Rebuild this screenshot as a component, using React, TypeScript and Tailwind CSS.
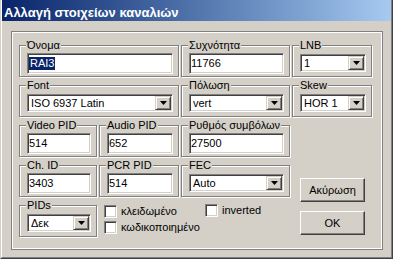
import type { ReactNode } from 'react'

const sunken =
  'border border-t-[#808080] border-l-[#808080] border-r-white border-b-white shadow-[inset_1px_1px_0_#404040,inset_-1px_-1px_0_#d4d0c8] bg-white'

const raised =
  'border border-t-[#d4d0c8] border-l-[#d4d0c8] border-r-[#404040] border-b-[#404040] shadow-[inset_1px_1px_0_#fff,inset_-1px_-1px_0_#808080] bg-[#d4d0c8]'

interface GroupProps {
  label: string
  className?: string
  children: ReactNode
}

function Group({ label, className = '', children }: GroupProps) {
  return (
    <fieldset
      className={`h-[38px] shrink-0 border border-[#808080] shadow-[inset_1px_1px_0_#fff,1px_1px_0_#fff] pl-[7px] pr-[5px] ${className}`}
    >
      <legend className="-ml-[1px] px-[1px] bg-[#d4d0c8] leading-[13px]">{label}</legend>
      {children}
    </fieldset>
  )
}

function Field({ value, selected = false }: { value: string; selected?: boolean }) {
  return (
    <div className={`mt-[1px] h-[21px] pl-[1px] flex items-center ${sunken}`}>
      {selected ? (
        <span className="inline-block bg-[#0a246a] text-white leading-[13px] pl-[1px] pr-[1px]">{value}</span>
      ) : (
        <span className="leading-[13px]">{value}</span>
      )}
    </div>
  )
}

function Combo({ value }: { value: string }) {
  return (
    <div className={`mt-[2px] h-[18px] p-[1px] flex ${sunken}`}>
      <span className="flex-1 pl-[2px] leading-[14px] truncate">{value}</span>
      <span className={`w-[16px] h-[14px] flex items-center justify-center ${raised}`}>
        <svg width="7" height="4" viewBox="0 0 7 4">
          <polygon points="0,0 7,0 3.5,4" fill="#000" />
        </svg>
      </span>
    </div>
  )
}

function Check({ label }: { label: string }) {
  return (
    <div className="flex items-center gap-[4px] h-[13px]">
      <span className={`w-[13px] h-[13px] shrink-0 ${sunken}`} />
      <span className="leading-[13px] whitespace-nowrap">{label}</span>
    </div>
  )
}

function Button({ label }: { label: string }) {
  return (
    <div
      className={`w-[65px] h-[24px] flex items-center justify-center border border-t-white border-l-white border-r-[#404040] border-b-[#404040] shadow-[inset_-1px_-1px_0_#808080] bg-[#d4d0c8]`}
    >
      {label}
    </div>
  )
}

export default function App() {
  return (
    <div className="w-[393px] h-[259px] bg-[#d4d0c8] text-[11px] text-black font-['Liberation_Sans',Arial,sans-serif] overflow-hidden">
      <div className="h-full border-l border-l-[#d4d0c8] border-r border-r-[#404040] border-b border-b-[#404040]">
        <div className="h-full flex flex-col border-l border-l-white border-r border-r-[#808080] border-b border-b-[#808080]">
          <div className="h-[21px] shrink-0 pl-[2px] pt-[5px] bg-gradient-to-r from-[#0a246a] to-[#a6caf0] text-white font-bold text-[13px] leading-[15px] whitespace-nowrap">
            Αλλαγή στοιχείων καναλιών
          </div>

          <div className="ml-[9px] mt-[10px] w-[372px] h-[219px] border border-[#808080] shadow-[inset_0_0_0_1px_#fff] pl-[7px] pt-[7px] flex flex-col gap-[2px]">
            <div className="flex gap-[2px]">
              <Group label="Όνομα" className="w-[160px]">
                <Field value="RAI3" selected />
              </Group>
              <Group label="Συχνότητα" className="w-[109px]">
                <Field value="11766" />
              </Group>
              <Group label="LNB" className="w-[80px]">
                <Combo value="1" />
              </Group>
            </div>

            <div className="flex gap-[2px]">
              <Group label="Font" className="w-[160px]">
                <Combo value="ISO 6937 Latin" />
              </Group>
              <Group label="Πόλωση" className="w-[109px]">
                <Combo value="vert" />
              </Group>
              <Group label="Skew" className="w-[80px]">
                <Combo value="HOR 1" />
              </Group>
            </div>

            <div className="flex gap-[2px]">
              <Group label="Video PID" className="w-[78px]">
                <Field value="514" />
              </Group>
              <Group label="Audio PID" className="w-[80px]">
                <Field value="652" />
              </Group>
              <Group label="Ρυθμός συμβόλων" className="w-[109px]">
                <Field value="27500" />
              </Group>
            </div>

            <div className="flex">
              <div className="w-[271px] flex flex-col gap-[2px]">
                <div className="flex gap-[2px]">
                  <Group label="Ch. ID" className="w-[78px]">
                    <Field value="3403" />
                  </Group>
                  <Group label="PCR PID" className="w-[80px]">
                    <Field value="514" />
                  </Group>
                  <Group label="FEC" className="w-[109px]">
                    <Combo value="Auto" />
                  </Group>
                </div>
                <div className="flex gap-[2px]">
                  <Group label="PIDs" className="w-[78px]">
                    <Combo value="Δεκ" />
                  </Group>
                  <div className="pl-[5px] pt-[6px] flex flex-col gap-[3px]">
                    <div className="flex">
                      <div className="w-[101px]">
                        <Check label="κλειδωμένο" />
                      </div>
                      <div className="-mt-[1px]">
                        <Check label="inverted" />
                      </div>
                    </div>
                    <Check label="κωδικοποιημένο" />
                  </div>
                </div>
              </div>
              <div className="pl-[10px] pt-[19px] flex flex-col gap-[9px]">
                <Button label="Ακύρωση" />
                <Button label="OK" />
              </div>
            </div>
          </div>
        </div>
      </div>
    </div>
  )
}
